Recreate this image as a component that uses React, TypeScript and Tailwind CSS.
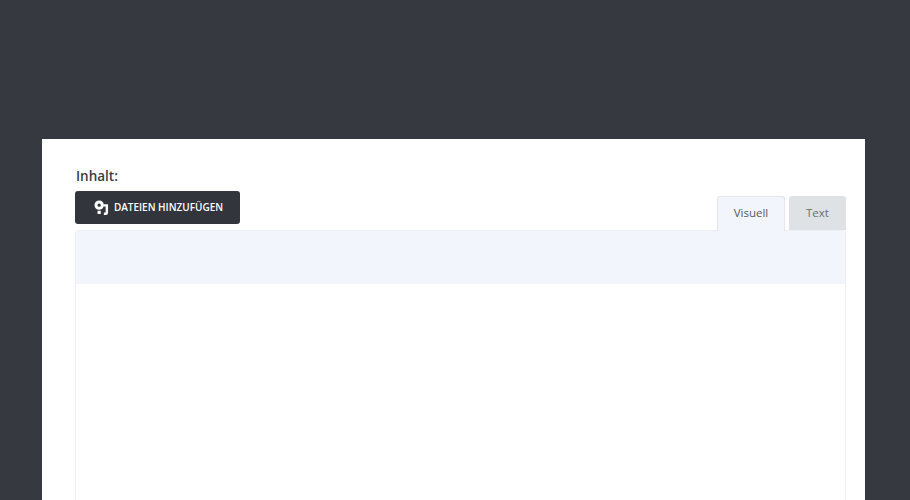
import React from "react";

const MediaIcon = () => (
  <svg viewBox="0 0 16 16" className="mr-[5px] h-[15px] w-[15px]" fill="white">
    <path fillRule="evenodd" d="M5.5 .5a5 5 0 1 1 0 10a5 5 0 0 1 0-10zm0 3.2a1.8 1.8 0 1 0 0 3.6a1.8 1.8 0 0 0 0-3.6z" />
    <rect x="3.8" y="11.5" width="3.4" height="3.4" />
    <path d="M10 4.5h5v9a2.4 2.4 0 0 1-2.4 2.4H10.5v-2.6h1.9V7H10z" />
  </svg>
);

const App = () => {
  return (
    <div className="h-[500px] w-[910px] overflow-hidden bg-[#363940] pt-[139px] pl-[42px] font-['Open_Sans',sans-serif]">
      <div className="h-[361px] w-[823px] bg-white pr-[19px] pl-[33px] pt-[28px]">
        <div className="pl-px text-[13.5px] leading-[19px] font-semibold text-[#3a3d42]">Inhalt:</div>
        <div className="mt-[5px] flex items-start justify-between">
          <button className="flex h-[33px] w-[165px] items-center justify-center rounded-[3px] bg-[#32353b] pl-[2px] text-[10px] font-semibold text-white">
            <MediaIcon />
            DATEIEN HINZUFÜGEN
          </button>
          <div className="mt-[5px] flex gap-[4px]">
            <div className="z-10 flex h-[35px] w-[68px] items-center justify-center rounded-t-[3px] border border-b-0 border-[#e3e5ea] bg-[#f3f5fc] pb-[2px] text-[11.5px] text-[#555a60]">
              Visuell
            </div>
            <div className="flex h-[34px] w-[57px] items-center justify-center rounded-t-[3px] bg-[#dfe2e5] pb-[1px] text-[11.5px] text-[#6a6f74]">
              Text
            </div>
          </div>
        </div>
        <div className="-mt-px h-[300px] rounded-t-[3px] border border-[#eceef1] bg-white">
          <div className="h-[53px] bg-[#f3f5fc]"></div>
        </div>
      </div>
    </div>
  );
};

export default App;
